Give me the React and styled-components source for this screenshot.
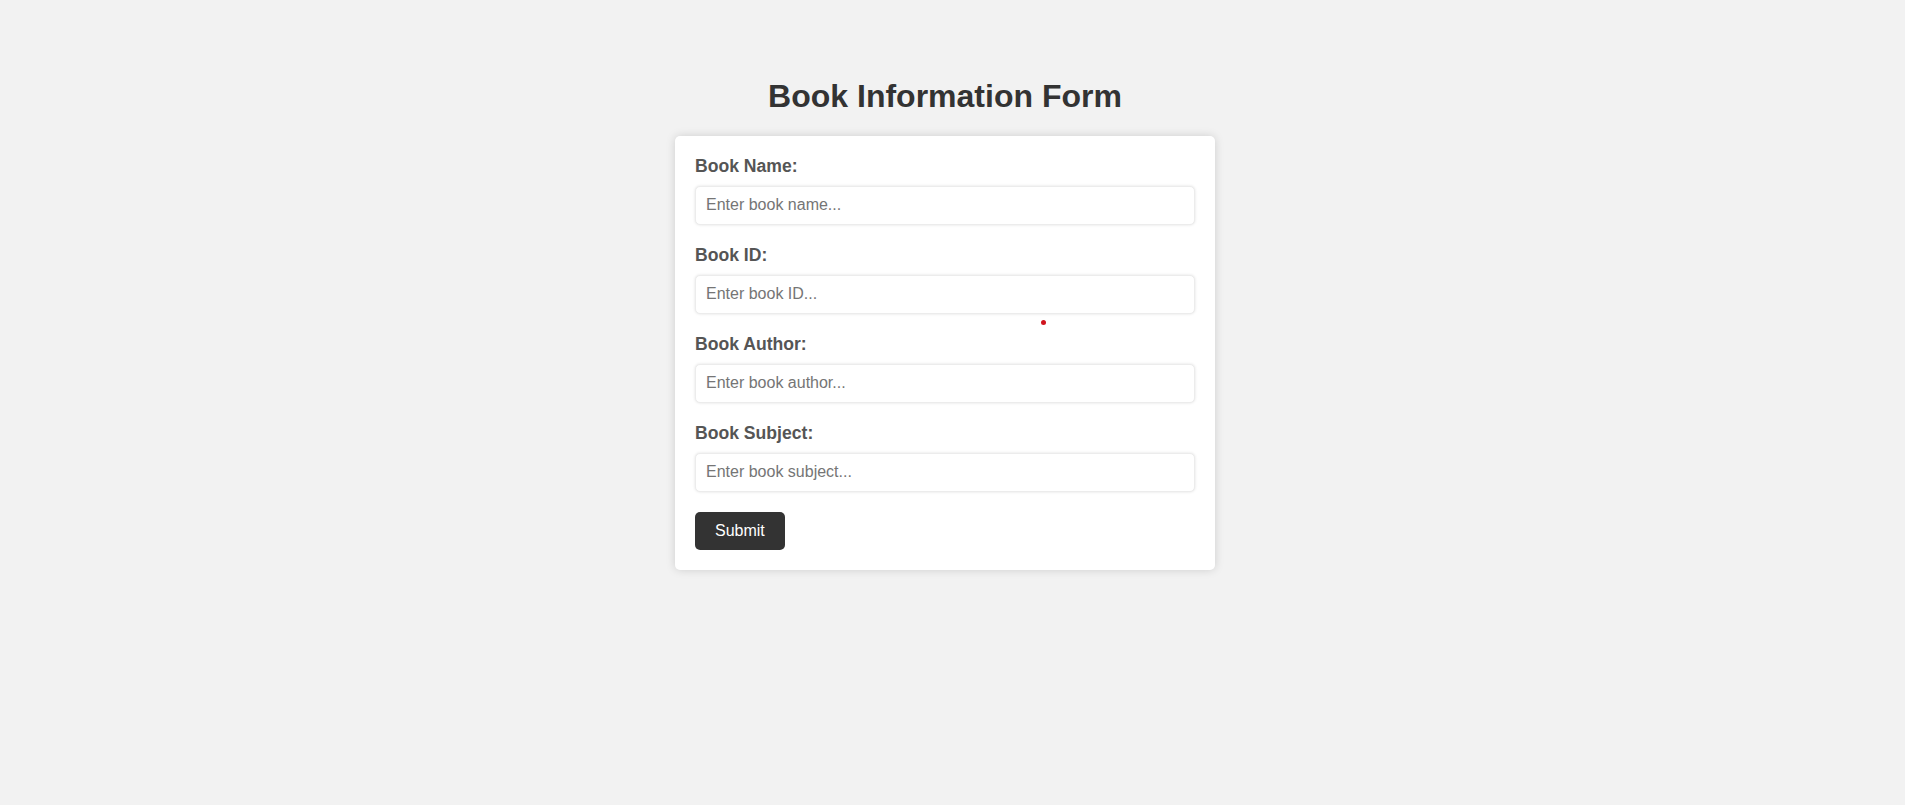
import React from "react";
import styled, { createGlobalStyle } from "styled-components";

const Global = createGlobalStyle`
  html, body {
    margin: 0;
    padding: 0;
    background: #f2f2f2;
    font-family: "Liberation Sans", Arial, sans-serif;
  }
  * { box-sizing: border-box; }
`;

const Page = styled.div`
  min-height: 805px;
  padding: 56px 15px 40px 0;
  display: flex;
  flex-direction: column;
  align-items: center;
`;

const Title = styled.h1`
  margin: 21.5px 0 21.5px;
  font-size: 32px;
  line-height: 36.8px;
  font-weight: 700;
  color: #333;
  text-align: center;
`;

const Card = styled.form`
  position: relative;
  width: 540px;
  padding: 20px;
  background: #fff;
  border-radius: 5px;
  box-shadow: 0 0 10px rgba(0, 0, 0, 0.15);
  display: flex;
  flex-direction: column;
`;

const Field = styled.div`
  display: flex;
  flex-direction: column;
  margin-bottom: 20px;
`;

const Label = styled.label`
  font-size: 17.6px;
  line-height: 20px;
  font-weight: 700;
  color: #555;
  margin-bottom: 10px;
`;

const Input = styled.input`
  width: 100%;
  height: 39px;
  padding: 0 10px;
  font-family: "Liberation Sans", Arial, sans-serif;
  font-size: 16px;
  color: #333;
  background: #fff;
  border: 1px solid #ececec;
  border-radius: 5px;
  box-shadow: 0 0 3px rgba(0, 0, 0, 0.12);
  outline: none;
  &::placeholder {
    color: #757575;
  }
`;

const Button = styled.button`
  align-self: flex-start;
  height: 38px;
  padding: 0 20px;
  font-family: "Liberation Sans", Arial, sans-serif;
  font-size: 16px;
  color: #fff;
  background: #333;
  border: none;
  border-radius: 5px;
  cursor: pointer;
`;

const Dot = styled.span`
  position: absolute;
  left: 366px;
  top: 184px;
  width: 5px;
  height: 5px;
  border-radius: 50%;
  background: #d0141e;
`;

const fields = [
  { id: "name", label: "Book Name:", placeholder: "Enter book name..." },
  { id: "bid", label: "Book ID:", placeholder: "Enter book ID..." },
  { id: "author", label: "Book Author:", placeholder: "Enter book author..." },
  { id: "subject", label: "Book Subject:", placeholder: "Enter book subject..." },
];

export default function App() {
  return (
    <>
      <Global />
      <Page>
        <Title>Book Information Form</Title>
        <Card onSubmit={(e) => e.preventDefault()}>
          {fields.map((f) => (
            <Field key={f.id}>
              <Label htmlFor={f.id}>{f.label}</Label>
              <Input id={f.id} type="text" placeholder={f.placeholder} />
            </Field>
          ))}
          <Button type="submit">Submit</Button>
          <Dot />
        </Card>
      </Page>
    </>
  );
}
